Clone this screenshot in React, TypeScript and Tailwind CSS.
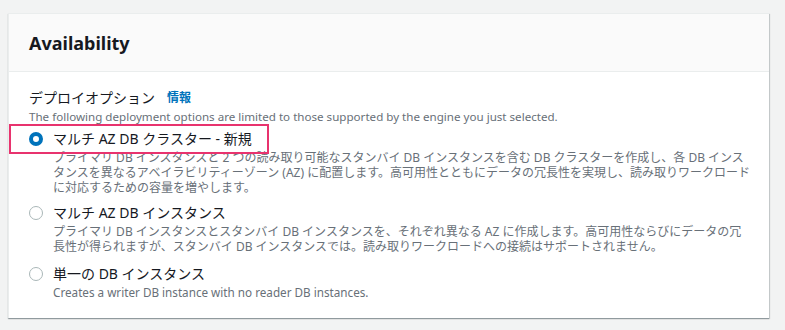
import React from "react";

const font = { fontFamily: '"Noto Sans", "Noto Sans CJK JP", sans-serif' };

function Radio({ checked }: { checked?: boolean }) {
  return checked ? (
    <span className="box-border inline-block h-[14px] w-[14px] shrink-0 rounded-full border-[4px] border-[#0073bb] bg-white" />
  ) : (
    <span className="box-border inline-block h-[14px] w-[14px] shrink-0 rounded-full border-[1.5px] border-[#aab7b8] bg-white" />
  );
}

function Option({
  checked,
  label,
  lines,
  highlight,
  latin,
  className,
}: {
  checked?: boolean;
  label: string;
  lines: string[];
  highlight?: boolean;
  latin?: boolean;
  className?: string;
}) {
  return (
    <div className={"relative flex flex-col " + (className ?? "")}>
      {highlight && (
        <div className="pointer-events-none absolute left-[-20px] top-[-5px] h-[30px] w-[260px] border-2 border-[#e8336e]" />
      )}
      <div className="flex h-[20px] items-center">
        <Radio checked={checked} />
        <span className="ml-[10px] text-[14px] leading-[20px] text-[#16191f]">{label}</span>
      </div>
      <div
        className={
          "ml-[24px] mt-[1px] leading-[15px] text-[#687078] " + (latin ? "text-[11.7px]" : "text-[12px]")
        }
      >
        {lines.map((l, i) => (
          <div key={i} className="h-[15px] whitespace-nowrap">
            {l}
          </div>
        ))}
      </div>
    </div>
  );
}

export default function App() {
  return (
    <div className="h-[330px] w-[785px] bg-[#f2f3f3] pl-[8px] pt-[13px]" style={font}>
      <div className="w-[761px] border-l border-t border-[#eaeded] bg-white shadow-[0_1px_1px_0_rgba(0,28,36,0.3),1px_1px_1px_0_rgba(0,28,36,0.15)]">
        <div className="flex h-[58px] items-center border-b border-[#eaeded] bg-[#fafafa] px-[20px]">
          <h2 className="text-[18px] font-bold leading-[22px] text-[#16191f]">Availability</h2>
        </div>
        <div className="px-[20px] pb-[18px] pt-[16px]">
          <div className="flex h-[20px] items-center">
            <span className="text-[14px] leading-[20px] text-[#16191f]">デプロイオプション</span>
            <span className="ml-[12px] text-[12px] font-bold leading-[20px] text-[#0073bb]">情報</span>
          </div>
          <div className="h-[18px] whitespace-nowrap text-[11.6px] leading-[18px] text-[#687078]">
            The following deployment options are limited to those supported by the engine you just selected.
          </div>
          <div className="mt-[3px] flex flex-col">
            <Option
              checked
              highlight
              label="マルチ AZ DB クラスター - 新規"
              lines={[
                "プライマリ DB インスタンスと 2 つの読み取り可能なスタンバイ DB インスタンスを含む DB クラスターを作成し、各 DB インス",
                "タンスを異なるアベイラビリティーゾーン (AZ) に配置します。高可用性とともにデータの冗長性を実現し、読み取りワークロード",
                "に対応するための容量を増やします。",
              ]}
            />
            <Option
              className="mt-[8px]"
              label="マルチ AZ DB インスタンス"
              lines={[
                "プライマリ DB インスタンスとスタンバイ DB インスタンスを、それぞれ異なる AZ に作成します。高可用性ならびにデータの冗",
                "長性が得られますが、スタンバイ DB インスタンスでは。読み取りワークロードへの接続はサポートされません。",
              ]}
            />
            <Option
              className="mt-[10px]"
              latin
              label="単一の DB インスタンス"
              lines={["Creates a writer DB instance with no reader DB instances."]}
            />
          </div>
        </div>
      </div>
    </div>
  );
}
